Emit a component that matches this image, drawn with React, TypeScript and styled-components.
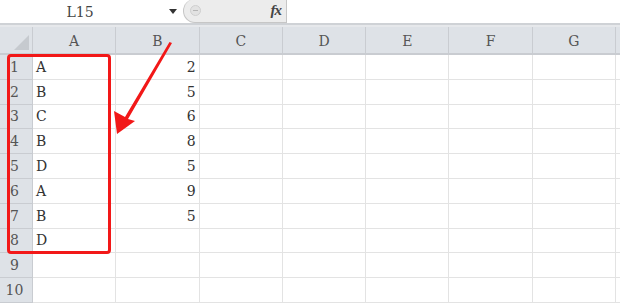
import React from "react";
import styled, { createGlobalStyle } from "styled-components";

const Global = createGlobalStyle`
  html, body { margin: 0; padding: 0; background: #fff; }
  body { width: 620px; height: 303px; overflow: hidden; }
`;

const Page = styled.div`
  position: relative;
  width: 620px;
  height: 303px;
  overflow: hidden;
  font-family: "DejaVu Serif", "Liberation Serif", serif;
  color: #333;
`;

const TopBar = styled.div`
  display: flex;
  align-items: stretch;
  height: 23px;
  background: #fff;
  border-bottom: 2px solid #cfd2d6;
`;

const NameBox = styled.div`
  width: 160px;
  display: flex;
  align-items: center;
  justify-content: center;
  font-size: 14px;
  color: #444;
  box-sizing: border-box;
`;

const DropArrow = styled.div`
  width: 23px;
  display: flex;
  align-items: center;
  justify-content: center;
  &::after {
    content: "";
    border-left: 4px solid transparent;
    border-right: 4px solid transparent;
    border-top: 5px solid #333;
    margin-left: 3px;
  }
`;

const FormulaPill = styled.div`
  width: 104px;
  box-sizing: border-box;
  margin-top: -1px;
  background: #ececec;
  border: 1px solid #c6c6c6;
  border-top: none;
  border-radius: 14px 0 0 14px;
  display: flex;
  align-items: center;
  justify-content: space-between;
  padding: 0 5px 0 6px;
`;

const CircleBtn = styled.div`
  width: 9px;
  height: 9px;
  border-radius: 50%;
  background: #e2e2e2;
  border: 1px solid #cfcfcf;
  display: flex;
  align-items: center;
  justify-content: center;
  &::after {
    content: "";
    width: 5px;
    height: 1px;
    background: #b5b5b5;
  }
`;

const Fx = styled.span`
  font-family: "Liberation Serif", serif;
  font-style: italic;
  font-weight: bold;
  font-size: 15px;
  color: #444;
  letter-spacing: -1px;
`;

const Gap = styled.div`
  height: 2px;
  background: #e6e8eb;
`;

const Grid = styled.div`
  display: grid;
  grid-template-columns: 33px repeat(7, 83.3px) 1fr;
  grid-template-rows: 28px repeat(10, 24.8px);
`;

const Corner = styled.div`
  background: #dee2e7;
  border-right: 1px solid #c9ccd1;
  border-bottom: 2px solid #c9ccd1;
  position: relative;
  &::after {
    content: "";
    position: absolute;
    right: 3px;
    bottom: 3px;
    border-left: 15px solid transparent;
    border-bottom: 15px solid #c6cacf;
  }
`;

const ColHead = styled.div`
  background: #dee2e7;
  border-right: 1px solid #c9ccd1;
  border-bottom: 2px solid #c9ccd1;
  display: flex;
  align-items: center;
  justify-content: center;
  font-size: 14px;
  color: #555;
  padding-top: 2px;
`;

const RowHead = styled.div`
  background: #dee2e7;
  border-right: 1px solid #c9ccd1;
  border-bottom: 1px solid #c9ccd1;
  display: flex;
  align-items: center;
  justify-content: center;
  padding-right: 3px;
  font-size: 14px;
  color: #555;
`;

const Cell = styled.div<{ $align?: "left" | "right" }>`
  border-right: 1px solid #e3e3e3;
  border-bottom: 1px solid #e3e3e3;
  display: flex;
  align-items: center;
  justify-content: ${(p) => (p.$align === "right" ? "flex-end" : "flex-start")};
  padding: 0 3px 0 3px;
  font-size: 14px;
  color: #333;
  min-width: 0;
`;

const Highlight = styled.div`
  position: absolute;
  left: 7px;
  top: 54px;
  width: 104px;
  height: 200px;
  box-sizing: border-box;
  border: 3px solid #f21818;
  border-radius: 4px;
  pointer-events: none;
`;

const ArrowSvg = styled.svg`
  position: absolute;
  left: 0;
  top: 0;
  pointer-events: none;
`;

const cols = ["A", "B", "C", "D", "E", "F", "G"];
const data: [string, string][] = [
  ["A", "2"],
  ["B", "5"],
  ["C", "6"],
  ["B", "8"],
  ["D", "5"],
  ["A", "9"],
  ["B", "5"],
  ["D", ""],
  ["", ""],
  ["", ""],
];

export default function App() {
  return (
    <Page>
      <Global />
      <TopBar>
        <NameBox>L15</NameBox>
        <DropArrow />
        <FormulaPill>
          <CircleBtn />
          <Fx>fx</Fx>
        </FormulaPill>
      </TopBar>
      <Gap />
      <Grid>
        <Corner />
        {cols.map((c) => (
          <ColHead key={c}>{c}</ColHead>
        ))}
        <ColHead />
        {data.map(([a, b], i) => (
          <React.Fragment key={i}>
            <RowHead>{i + 1}</RowHead>
            <Cell>{a}</Cell>
            <Cell $align="right">{b}</Cell>
            {cols.slice(2).map((c) => (
              <Cell key={c} />
            ))}
            <Cell />
          </React.Fragment>
        ))}
      </Grid>
      <Highlight />
      <ArrowSvg width="620" height="303" viewBox="0 0 620 303">
        <path
          d="M172 43 L169.5 42 L125 117 L114 111 L117 134 L135 121 L128 119 Z"
          fill="#f21818"
        />
      </ArrowSvg>
    </Page>
  );
}
